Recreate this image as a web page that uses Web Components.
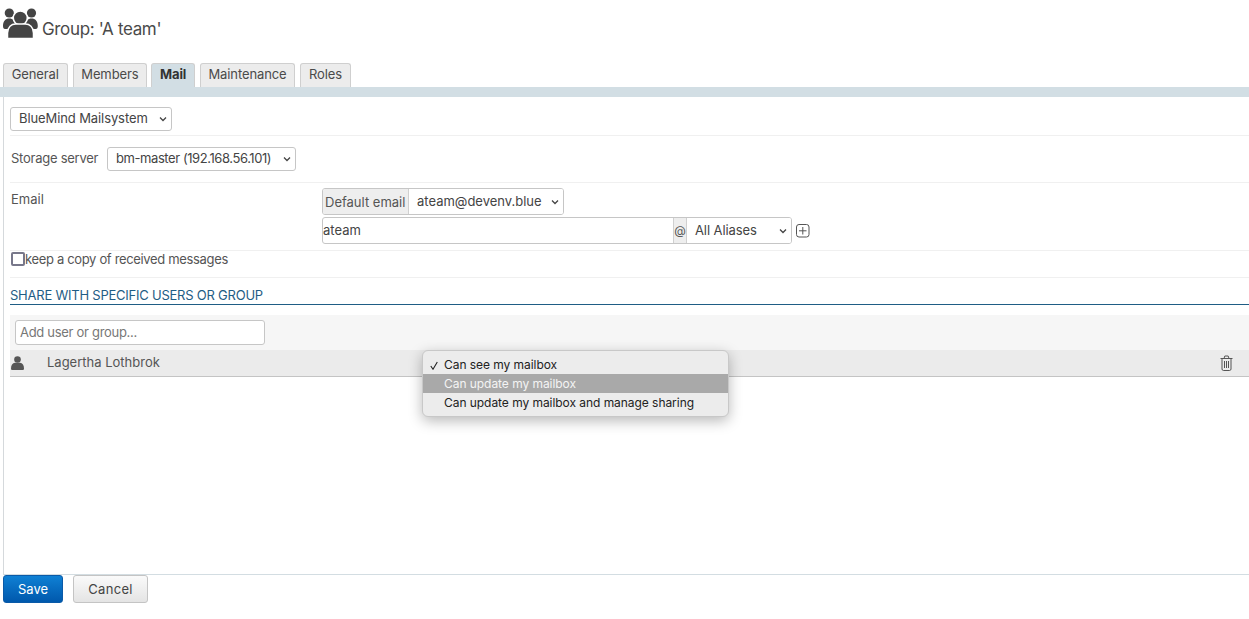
<!DOCTYPE html>
<html lang="en">
<head>
<meta charset="utf-8">
<title>Group</title>
<style>
  html, body { margin: 0; height: 100%; }
  body { font: 13px/16px Inter, "Liberation Sans", sans-serif; color: #555; background: #fff; overflow: hidden; }
</style>
</head>
<body>
<group-page>
  <group-header slot="header">Group: 'A team'</group-header>
  <tab-bar slot="tabs">
    <tab-item>General</tab-item>
    <tab-item>Members</tab-item>
    <tab-item selected>Mail</tab-item>
    <tab-item>Maintenance</tab-item>
    <tab-item>Roles</tab-item>
  </tab-bar>

  <form-row style="--pad: 10px 0 4px">
    <select-box style="--w: 162px; --pb: 3px; letter-spacing: -.1px">BlueMind Mailsystem</select-box>
  </form-row>

  <form-row style="--pad: 11px 0 11px; --left: 1px">
    <span style="width: 96px; margin-bottom: 2px; letter-spacing: -.25px">Storage server</span>
    <select-box style="--w: 189px; --pb: 3px; letter-spacing: -.42px">bm-master (192.168.56.101)</select-box>
  </form-row>

  <form-row style="--pad: 5px 0 6px; --left: 1px; --align: flex-start">
    <span style="width: 311px; margin-top: 3px">Email</span>
    <email-fields></email-fields>
  </form-row>

  <form-row style="--pad: 0 0 11px; --left: 1px">
    <check-line>keep a copy of received messages</check-line>
  </form-row>

  <section-title>SHARE WITH SPECIFIC USERS OR GROUP</section-title>
  <share-search placeholder="Add user or group..."></share-search>
  <share-row name="Lagertha Lothbrok">
    <share-menu slot="menu">
      <menu-line checked>Can see my mailbox</menu-line>
      <menu-line active>Can update my mailbox</menu-line>
      <menu-line>Can update my mailbox and manage sharing</menu-line>
    </share-menu>
  </share-row>

  <action-button slot="footer" primary>Save</action-button>
  <action-button slot="footer">Cancel</action-button>
</group-page>

<script>
class GroupPage extends HTMLElement {
  constructor() {
    super();
    const styles = `
    :host { display: flex; flex-direction: column; height: 619px; box-sizing: border-box; }
    .panel { flex: 1; margin-left: 3px; border-left: 1px solid #d5d9dc; border-bottom: 1px solid #d3dde2; padding-left: 6px; min-height: 0; }
    footer { display: flex; gap: 10px; padding: 0 0 16px 3px; }
    `;
    this.attachShadow({ mode: 'open' }).innerHTML = `<style>${styles}</style>
      <slot name="header"></slot>
      <slot name="tabs"></slot>
      <div class="panel"><slot></slot></div>
      <footer><slot name="footer"></slot></footer>`;
  }
}

class GroupHeader extends HTMLElement {
  constructor() {
    super();
    const styles = `
    :host { display: flex; height: 63px; padding-left: 3px; box-sizing: border-box; color: #4a4a4a; }
    svg { margin-top: 8px; width: 35px; height: 31px; flex: none; }
    span { margin: 19px 0 0 4px; font-size: 17px; line-height: 20px; letter-spacing: -.35px; }
    `;
    this.attachShadow({ mode: 'open' }).innerHTML = `<style>${styles}</style>
      <svg viewBox="0 0 35 31" fill="#444">
        <circle cx="6.3" cy="5" r="4.6"/>
        <circle cx="28.5" cy="5" r="4.6"/>
        <path d="M0 18c0-5 2.5-7.5 6.3-7.5 3.600 0 6 2.500 6 7.500v3H2c-1.300 0-2-1-2-3zM22.500 18c0-5 2.400-7.500 6-7.500 3.800 0 6.300 2.500 6.300 7.500 0 2-.7 3-2 3H22.500z"/>
        <circle cx="17.300" cy="10" r="7" stroke="#fff" stroke-width="1.500"/>
        <path d="M4.500 30.500v-5.500c0-6 4-9 8-9h10c4 0 8 3 8 9v5.500z" stroke="#fff" stroke-width="1.500"/>
      </svg>
      <span><slot></slot></span>`;
  }
}

class TabBar extends HTMLElement {
  constructor() {
    super();
    const styles = `
    :host { display: block; }
    .tabs { display: flex; gap: 5px; padding-left: 3px; height: 24px; }
    .band { height: 10px; background: #d2dee4; }
    `;
    this.attachShadow({ mode: 'open' }).innerHTML = `<style>${styles}</style>
      <div class="tabs"><slot></slot></div><div class="band"></div>`;
  }
}

class TabItem extends HTMLElement {
  constructor() {
    super();
    const styles = `
    :host { display: block; box-sizing: border-box; height: 24px; padding: 2px 7.7px 0; border: 1px solid #cfcfcf; border-bottom: 0; border-radius: 3px 3px 0 0; background: #ececec; color: #4a4a4a; letter-spacing: -.1px; white-space: nowrap; }
    :host([selected]) { background: #d2dee4; font-weight: 700; color: #333; padding: 2px 7.5px 0; margin-left: -.8px; }
    `;
    this.attachShadow({ mode: 'open' }).innerHTML = `<style>${styles}</style><slot></slot>`;
  }
}

class FormRow extends HTMLElement {
  constructor() {
    super();
    const styles = `
    :host { display: flex; align-items: var(--align, center); padding: var(--pad, 0); padding-left: var(--left, 0); border-bottom: 1px solid #f0f0f0; }
    `;
    this.attachShadow({ mode: 'open' }).innerHTML = `<style>${styles}</style><slot></slot>`;
  }
}

class SelectBox extends HTMLElement {
  constructor() {
    super();
    const styles = `
    :host { display: flex; align-items: center; box-sizing: border-box; width: var(--w, auto); height: var(--h, 24px); padding: 0 4px var(--pb, 1px) 8px; background: #fff; border: var(--bd, 1px solid #c6c6c6); border-radius: var(--rad, 3px); color: #444; white-space: nowrap; flex: none; }
    span { flex: 1; }
    svg { width: 8px; height: 6px; flex: none; margin-top: 2px; }
    `;
    this.attachShadow({ mode: 'open' }).innerHTML = `<style>${styles}</style>
      <span><slot></slot></span>
      <svg viewBox="0 0 8 6" fill="none" stroke="#444" stroke-width="1.300"><path d="M1 1.500l3 3 3-3"/></svg>`;
  }
}

class EmailFields extends HTMLElement {
  constructor() {
    super();
    const styles = `
    :host { display: flex; flex-direction: column; gap: 2px; width: 490px; }
    .line { display: flex; align-items: center; }
    .group { display: flex; box-sizing: border-box; border: 1px solid #c6c6c6; border-radius: 3px; overflow: hidden; }
    .one { width: 242px; height: 27px; }
    .two { width: 470px; height: 27px; }
    .addon { display: flex; align-items: center; box-sizing: border-box; background: #eee; color: #555; border-right: 1px solid #d0d0d0; }
    .mail { width: 86px; padding-left: 2px; white-space: nowrap; }
    .at { width: 14px; justify-content: center; border-left: 1px solid #d0d0d0; font-size: 12px; }
    .input { flex: 1; padding: 4px 0 0 0; color: #444; }
    select-box { --h: 25px; --bd: 0; --rad: 0; }
    svg { margin-left: 4px; width: 14px; height: 14px; flex: none; }
    `;
    this.attachShadow({ mode: 'open' }).innerHTML = `<style>${styles}</style>
      <div class="line"><div class="group one">
        <div class="addon mail">Default email</div>
        <select-box style="--w: 154px; --pb: 2px">ateam@devenv.blue</select-box>
      </div></div>
      <div class="line"><div class="group two">
        <div class="input">ateam</div>
        <div class="addon at">@</div>
        <select-box style="--w: 104px; letter-spacing: -.1px">All Aliases</select-box>
      </div>
      <svg viewBox="0 0 14 14" fill="none" stroke="#555"><rect x=".5" y=".5" width="12.500" height="12.500" rx="2.500"/><path d="M6.800 3v7.500M3 6.800h7.500"/></svg>
      </div>`;
  }
}

class CheckLine extends HTMLElement {
  constructor() {
    super();
    const styles = `
    :host { display: flex; align-items: center; height: 15px; letter-spacing: -.34px; }
    i { box-sizing: border-box; width: 14px; height: 14px; border: 2px solid #77778a; border-radius: 2px; background: #fff; flex: none; }
    `;
    this.attachShadow({ mode: 'open' }).innerHTML = `<style>${styles}</style><i></i><slot></slot>`;
  }
}

class SectionTitle extends HTMLElement {
  constructor() {
    super();
    const styles = `
    :host { display: block; box-sizing: border-box; height: 27px; padding-top: 9px; margin-bottom: 10px; border-bottom: 1px solid #1f5d85; color: #1f5d85; letter-spacing: -.23px; white-space: nowrap; }
    `;
    this.attachShadow({ mode: 'open' }).innerHTML = `<style>${styles}</style><slot></slot>`;
  }
}

class ShareSearch extends HTMLElement {
  constructor() {
    super();
    const styles = `
    :host { display: block; box-sizing: border-box; height: 35px; padding: 5px 0 0 5px; background: #f6f6f6; }
    div { box-sizing: border-box; width: 250px; height: 25px; padding: 3px 0 0 4px; background: #fff; border: 1px solid #c6c6c6; border-radius: 3px; color: #777; letter-spacing: -.3px; }
    `;
    this.attachShadow({ mode: 'open' }).innerHTML = `<style>${styles}</style><div>${this.getAttribute('placeholder')}</div>`;
  }
}

class ShareRow extends HTMLElement {
  constructor() {
    super();
    const styles = `
    :host { display: flex; align-items: center; position: relative; box-sizing: border-box; height: 27px; background: #ebebeb; border-bottom: 1px solid #c4c4c4; }
    .user { width: 13px; height: 14px; margin-left: 1px; flex: none; }
    .name { margin: 0 0 2px 23px; flex: 1; }
    .trash { width: 13px; height: 16px; margin-right: 16px; flex: none; }
    `;
    this.attachShadow({ mode: 'open' }).innerHTML = `<style>${styles}</style>
      <svg class="user" viewBox="0 0 13 14" fill="#555"><circle cx="6.500" cy="3.500" r="3.300"/><path d="M0 12.500c0-3.500 1.500-5.500 4-5.800h5c2.500.3 4 2.300 4 5.800 0 1-.6 1.500-1.500 1.500h-10C.6 14 0 13.500 0 12.500z"/></svg>
      <span class="name">${this.getAttribute('name')}</span>
      <slot name="menu"></slot>
      <svg class="trash" viewBox="0 0 13 16" fill="none" stroke="#555"><path d="M.5 3.500h12M2 3.500v10.500c0 .8.500 1.500 1.300 1.500h6.400c.8 0 1.300-.7 1.300-1.500V3.500M4 3.500l.8-2.500h3.400l.8 2.500M4.500 6v7M6.500 6v7M8.500 6v7"/></svg>`;
  }
}

class ShareMenu extends HTMLElement {
  constructor() {
    super();
    const styles = `
    :host { display: block; position: absolute; left: 412px; top: 0; width: 307px; box-sizing: border-box; padding: 4px 0 4px; background: #ececec; border: 1px solid #c8c8c8; border-radius: 6px; box-shadow: 0 4px 14px rgba(0,0,0,.28); z-index: 2; }
    `;
    this.attachShadow({ mode: 'open' }).innerHTML = `<style>${styles}</style><slot></slot>`;
  }
}

class MenuLine extends HTMLElement {
  constructor() {
    super();
    const styles = `
    :host { display: block; position: relative; height: 19px; padding-left: 21px; font: 12px/19px Inter, "Liberation Sans", sans-serif; letter-spacing: -.05px; color: #222; white-space: nowrap; }
    :host([active]) { background: #a9a9a9; color: #f4f4f4; }
    svg { position: absolute; left: 7px; top: 6px; width: 8px; height: 9px; }
    `;
    const check = this.hasAttribute('checked')
      ? '<svg viewBox="0 0 8 9" fill="none" stroke="#222" stroke-width="1.100"><path d="M.8 5l2.200 3.200L7.300 1"/></svg>' : '';
    this.attachShadow({ mode: 'open' }).innerHTML = `<style>${styles}</style>${check}<slot></slot>`;
  }
}

class ActionButton extends HTMLElement {
  constructor() {
    super();
    const styles = `
    :host { display: flex; align-items: center; justify-content: center; box-sizing: border-box; height: 28px; width: 75px; border: 1px solid #c4c4c4; border-radius: 3px; background: linear-gradient(#fafafa, #e4e4e4); color: #444; letter-spacing: .3px; }
    :host([primary]) { width: 60px; border-color: #0a5aa8; background: linear-gradient(#0f80d4, #0058ac); color: #fff; letter-spacing: 0; }
    `;
    this.attachShadow({ mode: 'open' }).innerHTML = `<style>${styles}</style><slot></slot>`;
  }
}

customElements.define('group-page', GroupPage);
customElements.define('group-header', GroupHeader);
customElements.define('tab-bar', TabBar);
customElements.define('tab-item', TabItem);
customElements.define('form-row', FormRow);
customElements.define('select-box', SelectBox);
customElements.define('email-fields', EmailFields);
customElements.define('check-line', CheckLine);
customElements.define('section-title', SectionTitle);
customElements.define('share-search', ShareSearch);
customElements.define('share-row', ShareRow);
customElements.define('share-menu', ShareMenu);
customElements.define('menu-line', MenuLine);
customElements.define('action-button', ActionButton);
</script>
</body>
</html>
